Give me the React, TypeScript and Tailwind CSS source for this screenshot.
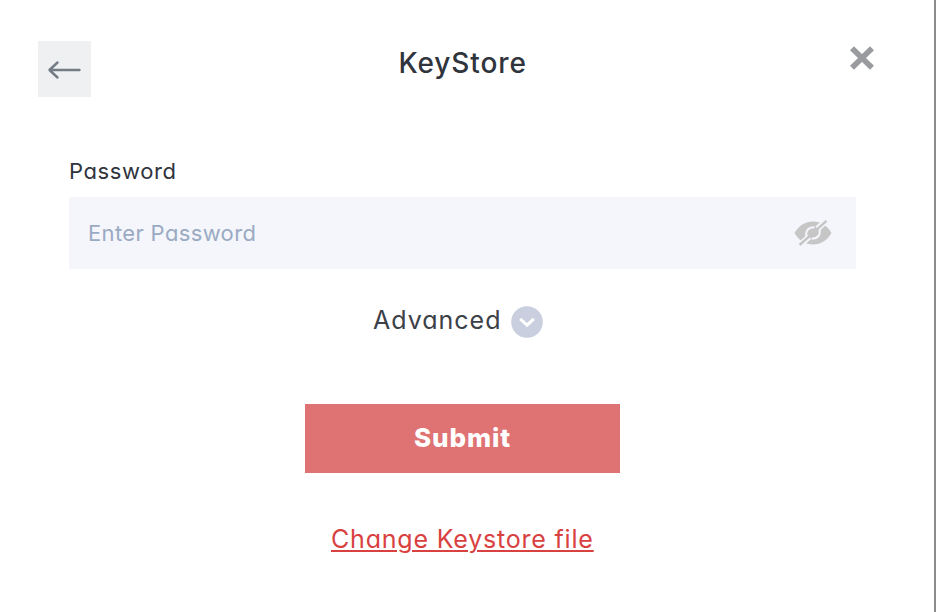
function BackArrow() {
  return (
    <svg className="mt-[2px] h-6 w-9" viewBox="0 0 36 24" fill="none" stroke="#737c85" strokeWidth="2.4" strokeLinecap="round" strokeLinejoin="round">
      <path d="M32.500 12H3M10.500 4.500L2.500 12l8 7.500" />
    </svg>
  );
}

function CloseIcon() {
  return (
    <svg className="block h-6 w-6" viewBox="0 0 24 24" fill="none" stroke="#999b9e" strokeWidth="5.6">
      <path d="M2 2.200L22 21.800M22 2.200L2 21.800" />
    </svg>
  );
}

function HiddenEyeIcon() {
  return (
    <svg className="block h-[26px] w-[38px]" viewBox="0 0 38 26" fill="none">
      <path d="M.6 13C4.800 5.500 11.300 1.500 19 1.500s14.200 4 18.400 11.500C33.200 20.500 26.700 24.500 19 24.500S4.800 20.500.6 13z" fill="#c6c6c6" />
      <path d="M12.800 17.500C10.800 11.500 14 7.200 20.500 7.200M25.200 8.500C27.200 14.500 24 18.800 17.500 18.800" stroke="#f4f6fb" strokeWidth="2" />
      <path d="M4.500 26.500L15 16.700M23.500 8.800L33.500-.5" stroke="#f4f6fb" strokeWidth="6" />
      <path d="M5.500 25L32.500.8" stroke="#c6c6c6" strokeWidth="2.400" />
    </svg>
  );
}

function ChevronBadge() {
  return (
    <svg className="block h-8 w-8" viewBox="0 0 32 32" fill="none">
      <circle cx="16" cy="16" r="15.800" fill="#c9cfde" />
      <path d="M9.200 12.800L16 19.200l6.800-6.400" stroke="#fff" strokeWidth="3" />
    </svg>
  );
}

export default function App() {
  return (
    <main className="flex h-[612px] w-[936px] flex-col border-r-2 border-[#8c8c8c] bg-white font-['Inter',sans-serif] text-[#30343d] [font-feature-settings:'cv11']">
      <header className="flex h-[98px] items-start justify-between pt-[41px] pr-[60px] pl-[38px]">
        <button aria-label="Back" className="flex h-14 w-[53px] items-center justify-center bg-[#eff0f2]">
          <BackArrow />
        </button>
        <h1 className="mt-[6px] -ml-[14px] h-8 w-[130px] text-[28px] leading-8 font-medium tracking-[0.9px] whitespace-nowrap">KeyStore</h1>
        <button aria-label="Close" className="mt-[5px]">
          <CloseIcon />
        </button>
      </header>
      <form className="flex flex-col pt-[59px] pr-[78px] pl-[69px]">
        <label className="h-10 text-[22px] leading-7 tracking-[0.6px]">Password</label>
        <div className="flex h-[72px] items-center justify-between bg-[#f4f6fb] pr-[24px] pl-[19px]">
          <span className="text-[22px] leading-7 tracking-[0.35px] text-[#9baac3]">Enter Password</span>
          <HiddenEyeIcon />
        </div>
      </form>
      <div className="mt-[37px] flex h-8 items-center gap-[9px] pl-[373px]">
        <span className="-mt-1 w-[129px] text-[25px] leading-8 tracking-[1px] whitespace-nowrap text-[#3c4047]">Advanced</span>
        <ChevronBadge />
      </div>
      <button className="mt-[66px] ml-[305px] flex h-[69px] w-[315px] items-center justify-center bg-[#df7273] text-[26px] font-extrabold tracking-[0.9px] text-white">
        <span className="-mt-[3px]">Submit</span>
      </button>
      <a className="mt-[50px] ml-[331px] h-9 w-[264px] text-[25px] leading-8 tracking-[0.8px] whitespace-nowrap text-[#d94141] underline decoration-2 underline-offset-2">Change Keystore file</a>
    </main>
  );
}
